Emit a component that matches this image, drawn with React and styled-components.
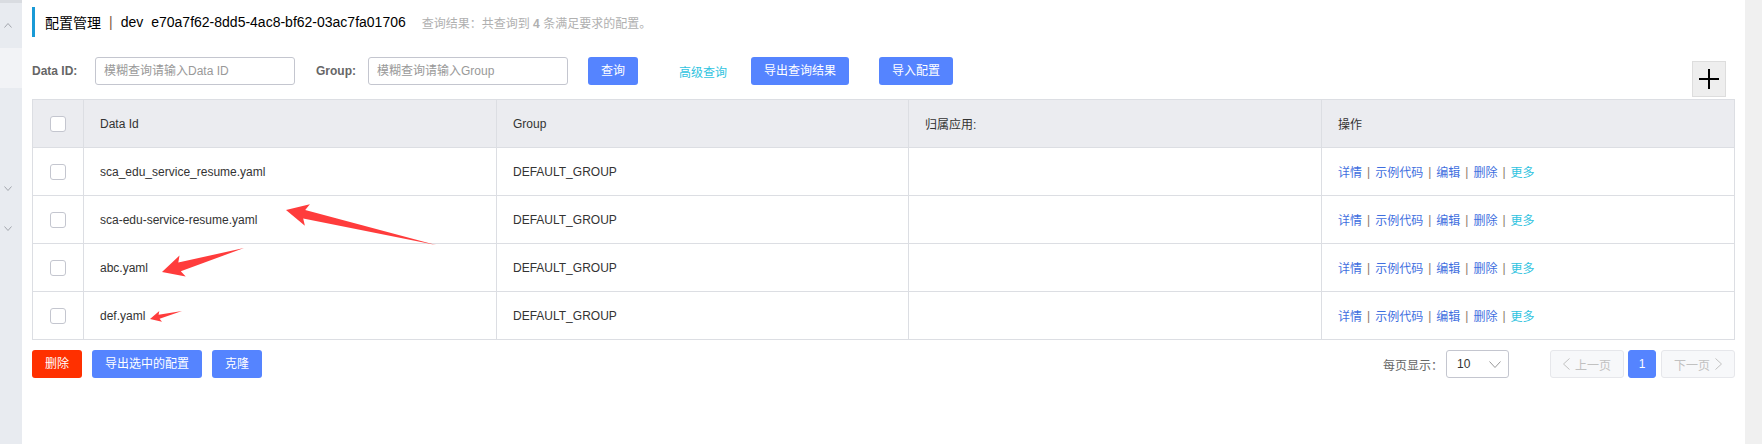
import React from 'react';
import styled, { createGlobalStyle } from 'styled-components';

const FONT = `"Liberation Sans", Arial, "Noto Sans CJK SC", sans-serif`;

const GlobalStyle = createGlobalStyle`
  *, *::before, *::after { box-sizing: border-box; }
  html, body { margin: 0; padding: 0; background: #fff; }
  body { font-family: ${FONT}; font-size: 12px; color: #333; }
`;

const Page = styled.div`
  position: relative;
  display: flex;
  width: 1762px;
  height: 444px;
  overflow: hidden;
  background: #fff;
`;

const Sidebar = styled.nav`
  flex: none;
  width: 22px;
  background: #e8ebf0;
  border-top: 3px solid #d9dce1;
  display: flex;
  flex-direction: column;
`;

const SideItem = styled.div`
  flex: none;
  height: ${p => p.$h || 40}px;
  display: flex;
  align-items: center;
  padding-left: 4px;
  background: ${p => (p.$active ? '#f2f3f6' : 'transparent')};
  color: #a3a6ad;
`;

const ScrollTrack = styled.div`
  flex: none;
  width: 17px;
  background: #f0f0f0;
`;

const Main = styled.main`
  flex: 1;
  min-width: 0;
  padding: 7px 10px 0 10px;
`;

const TitleBar = styled.div`
  height: 30px;
  border-left: 3px solid #199ad6;
  padding-left: 10px;
  display: flex;
  align-items: center;
  white-space: nowrap;
`;

const TitleText = styled.span`
  font-size: 14px;
  color: #000;
  margin-left: ${p => p.$ml || 0}px;
`;

const TitleSep = styled.span`
  font-size: 14px;
  color: #7a5a3e;
  margin: 0 8px;
`;

const ResultText = styled.span`
  font-size: 12px;
  color: #b0b0b0;
  margin-left: 16px;
  strong {
    font-weight: bold;
  }
`;

const SearchRow = styled.div`
  display: flex;
  align-items: flex-start;
  height: 40px;
  margin-top: 20px;
`;

const FormItem = styled.div`
  display: flex;
  align-items: center;
  height: 28px;
  margin-right: ${p => p.$mr || 20}px;
`;

const Label = styled.label`
  flex: none;
  width: ${p => p.$w}px;
  font-weight: bold;
  color: #666;
  font-size: 12px;
`;

const Input = styled.input`
  width: 200px;
  height: 28px;
  border: 1px solid #c4c6cf;
  border-radius: 3px;
  padding: 0 8px;
  font-family: ${FONT};
  font-size: 12px;
  color: #333;
  outline: none;
  background: #fff;
  &::placeholder {
    color: #999;
  }
`;

const Button = styled.button`
  flex: none;
  height: 28px;
  padding: 0 12px;
  margin-left: ${p => p.$ml || 0}px;
  border: 1px solid transparent;
  border-radius: 3px;
  background: ${p => (p.$danger ? '#ff3000' : '#5584ff')};
  color: #fff;
  font-family: ${FONT};
  font-size: 12px;
  line-height: 26px;
  white-space: nowrap;
  cursor: pointer;
`;

const TextButton = styled.button`
  flex: none;
  height: 28px;
  padding: 0;
  margin: 0 24px 0 41px;
  border: none;
  background: none;
  color: #2fc3e0;
  font-family: ${FONT};
  font-size: 12px;
  cursor: pointer;
`;

const AddButton = styled.button`
  flex: none;
  margin: 4px 9px 0 auto;
  width: 34px;
  height: 36px;
  padding: 0;
  background: #eeeeee;
  border: 1px solid #dddddd;
  display: flex;
  align-items: center;
  justify-content: center;
`;

const Table = styled.div`
  display: grid;
  grid-template-columns: 51px 413px 412px 413px 1fr;
  margin-top: 2px;
  border-top: 1px solid #dcdee3;
  border-left: 1px solid #dcdee3;
`;

const Cell = styled.div`
  height: 48px;
  border-right: 1px solid #dcdee3;
  border-bottom: 1px solid #dcdee3;
  background: ${p => (p.$head ? '#ebecf0' : '#fff')};
  display: flex;
  align-items: center;
  justify-content: ${p => (p.$center ? 'center' : 'flex-start')};
  padding: ${p => (p.$center ? '0' : '0 16px')};
  color: #333;
  font-size: 12px;
  white-space: nowrap;
`;

const Checkbox = styled.span`
  display: inline-block;
  width: 16px;
  height: 16px;
  border: 1px solid #c4c6cf;
  border-radius: 3px;
  background: #fff;
`;

const OpLink = styled.a`
  color: ${p => (p.$more ? '#2fc3e0' : '#3f6fe0')};
  text-decoration: none;
  cursor: pointer;
`;

const OpSep = styled.span`
  margin: 0 5px;
  color: #8a7a6a;
`;

const Footer = styled.div`
  display: flex;
  justify-content: space-between;
  align-items: center;
  margin-top: 10px;
`;

const ButtonGroup = styled.div`
  display: flex;
  gap: 10px;
`;

const Pager = styled.div`
  display: flex;
  align-items: center;
`;

const PagerLabel = styled.span`
  color: #666;
  font-size: 12px;
  margin-right: 3px;
`;

const Select = styled.div`
  width: 63px;
  height: 28px;
  margin-right: 41px;
  border: 1px solid #c4c6cf;
  border-radius: 3px;
  display: flex;
  align-items: center;
  justify-content: space-between;
  padding: 0 7px 0 10px;
  color: #333;
  font-size: 12px;
  background: #fff;
`;

const PageBtn = styled.button`
  flex: none;
  height: 28px;
  width: ${p => p.$w}px;
  margin-left: ${p => p.$ml || 0}px;
  padding: 0;
  border: 1px solid ${p => (p.$active ? '#5584ff' : '#e6e7eb')};
  border-radius: 3px;
  background: ${p => (p.$active ? '#5584ff' : '#f7f8fa')};
  color: ${p => (p.$active ? '#fff' : '#c1c1c1')};
  font-family: ${FONT};
  font-size: 12px;
  display: flex;
  align-items: center;
  justify-content: center;
  gap: 5px;
`;

const Overlay = styled.svg`
  position: absolute;
  left: 0;
  top: 0;
  pointer-events: none;
`;

const Chevron = ({ dir = 'down', w = 8, h = 5, color = 'currentColor' }) => {
  const pts = {
    up: `0.5,${h - 0.5} ${w / 2},0.5 ${w - 0.5},${h - 0.5}`,
    down: `0.5,0.5 ${w / 2},${h - 0.5} ${w - 0.5},0.5`,
    left: `${w - 0.5},0.5 0.5,${h / 2} ${w - 0.5},${h - 0.5}`,
    right: `0.5,0.5 ${w - 0.5},${h / 2} 0.5,${h - 0.5}`,
  }[dir];
  return (
    <svg width={w} height={h} viewBox={`0 0 ${w} ${h}`}>
      <polyline points={pts} fill="none" stroke={color} strokeWidth="1" />
    </svg>
  );
};

function arrowPoints(sx, sy, tx, ty, head, half, neck) {
  const dx = tx - sx;
  const dy = ty - sy;
  const len = Math.hypot(dx, dy);
  const ux = dx / len;
  const uy = dy / len;
  const nx = -uy;
  const ny = ux;
  const bx = tx - ux * head;
  const by = ty - uy * head;
  const kx = tx - ux * head * 0.85;
  const ky = ty - uy * head * 0.85;
  const pts = [
    [sx, sy],
    [kx + nx * neck, ky + ny * neck],
    [bx + nx * half, by + ny * half],
    [tx, ty],
    [bx - nx * half, by - ny * half],
    [kx - nx * neck, ky - ny * neck],
  ];
  return pts.map(p => p.map(v => v.toFixed(1)).join(',')).join(' ');
}

const ARROWS = [
  [436, 245, 286, 210, 22, 11, 4.5],
  [244, 248, 162, 272, 21.5, 11, 4.5],
  [182, 311, 150, 319, 11, 5.5, 2],
];

const ROWS = [
  'sca_edu_service_resume.yaml',
  'sca-edu-service-resume.yaml',
  'abc.yaml',
  'def.yaml',
];

const OPS = ['详情', '示例代码', '编辑', '删除'];

export default function App() {
  return (
    <>
      <GlobalStyle />
      <Page>
        <Sidebar>
          <SideItem $h={45}>
            <Chevron dir="up" />
          </SideItem>
          <SideItem $active />
          <SideItem />
          <SideItem />
          <SideItem>
            <Chevron dir="down" />
          </SideItem>
          <SideItem>
            <Chevron dir="down" />
          </SideItem>
        </Sidebar>

        <Main>
          <TitleBar>
            <TitleText>配置管理</TitleText>
            <TitleSep>|</TitleSep>
            <TitleText>dev</TitleText>
            <TitleText $ml={8}>e70a7f62-8dd5-4ac8-bf62-03ac7fa01706</TitleText>
            <ResultText>
              查询结果：共查询到 <strong>4</strong> 条满足要求的配置。
            </ResultText>
          </TitleBar>

          <SearchRow>
            <FormItem $mr={21}>
              <Label $w={63}>Data ID:</Label>
              <Input placeholder="模糊查询请输入Data ID" />
            </FormItem>
            <FormItem>
              <Label $w={52}>Group:</Label>
              <Input placeholder="模糊查询请输入Group" />
            </FormItem>
            <Button>查询</Button>
            <TextButton>高级查询</TextButton>
            <Button>导出查询结果</Button>
            <Button $ml={30}>导入配置</Button>
            <AddButton aria-label="add">
              <svg width="20" height="20" viewBox="0 0 20 20">
                <path d="M10 0v20M0 10h20" stroke="#000" strokeWidth="2" />
              </svg>
            </AddButton>
          </SearchRow>

          <Table>
            <Cell $head $center>
              <Checkbox />
            </Cell>
            <Cell $head>Data Id</Cell>
            <Cell $head>Group</Cell>
            <Cell $head>归属应用:</Cell>
            <Cell $head>操作</Cell>
            {ROWS.map(id => (
              <React.Fragment key={id}>
                <Cell $center>
                  <Checkbox />
                </Cell>
                <Cell>{id}</Cell>
                <Cell>DEFAULT_GROUP</Cell>
                <Cell />
                <Cell>
                  {OPS.map(op => (
                    <React.Fragment key={op}>
                      <OpLink>{op}</OpLink>
                      <OpSep>|</OpSep>
                    </React.Fragment>
                  ))}
                  <OpLink $more>更多</OpLink>
                </Cell>
              </React.Fragment>
            ))}
          </Table>

          <Footer>
            <ButtonGroup>
              <Button $danger>删除</Button>
              <Button>导出选中的配置</Button>
              <Button>克隆</Button>
            </ButtonGroup>
            <Pager>
              <PagerLabel>每页显示：</PagerLabel>
              <Select>
                <span>10</span>
                <Chevron dir="down" w={12} h={7} color="#999" />
              </Select>
              <PageBtn $w={74}>
                <Chevron dir="left" w={7} h={12} color="#c1c1c1" />
                上一页
              </PageBtn>
              <PageBtn $w={28} $ml={4} $active>
                1
              </PageBtn>
              <PageBtn $w={74} $ml={5}>
                下一页
                <Chevron dir="right" w={7} h={12} color="#c1c1c1" />
              </PageBtn>
            </Pager>
          </Footer>
        </Main>

        <ScrollTrack />

        <Overlay width="1762" height="444" viewBox="0 0 1762 444">
          {ARROWS.map((a, i) => (
            <polygon key={i} points={arrowPoints(...a)} fill="#ff3c3c" />
          ))}
        </Overlay>
      </Page>
    </>
  );
}
